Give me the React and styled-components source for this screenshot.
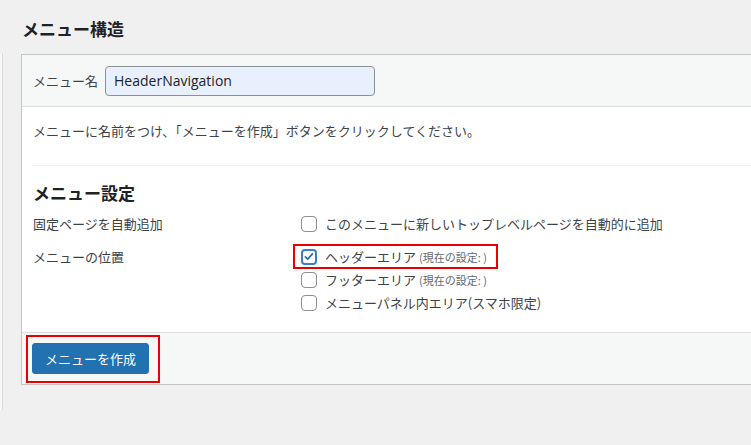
import React from "react";
import styled, { createGlobalStyle } from "styled-components";

const GlobalStyle = createGlobalStyle`
  html, body {
    margin: 0;
    padding: 0;
    background: #f0f0f1;
    overflow: hidden;
  }
  body {
    font-family: "Noto Sans CJK JP", "Noto Sans", sans-serif;
    font-size: 13px;
    color: #3c434a;
  }
`;

const Page = styled.div`
  display: flex;
  width: 751px;
  height: 445px;
  overflow: hidden;
`;

const SideColumn = styled.div`
  flex: none;
  width: 2px;
  height: 357px;
  margin-top: 53px;
  background: #f6f7f7;
  border-right: 1px solid #dcdcde;
`;

const Main = styled.div`
  flex: none;
  margin-left: 18px;
  width: 800px;
`;

const Title = styled.h2`
  margin: 0;
  padding: 17px 0 0 1px;
  height: 54px;
  box-sizing: border-box;
  font-size: 17px;
  line-height: 24px;
  font-weight: 700;
  color: #1d2327;
`;

const Panel = styled.div`
  background: #fff;
  border: 1px solid #c3c4c7;
`;

const PanelHeader = styled.div`
  display: flex;
  align-items: center;
  gap: 7px;
  height: 51px;
  padding: 0 11px;
  background: #f6f7f7;
  border-bottom: 1px solid #dcdcde;
`;

const Label = styled.span`
  line-height: 20px;
  color: #3c434a;
`;

const NameInput = styled.input`
  box-sizing: border-box;
  width: 270px;
  height: 30px;
  padding: 0 8px;
  border: 1px solid #8c8f94;
  border-radius: 4px;
  background: #e8f0fe;
  font-family: "Open Sans", "Noto Sans", sans-serif;
  font-size: 14px;
  color: #1d2327;
  outline: none;
`;

const PanelBody = styled.div`
  padding: 14px 11px 18px;
`;

const Description = styled.p`
  margin: 0;
  line-height: 20px;
`;

const Divider = styled.hr`
  margin: 24px 0 0;
  border: none;
  border-top: 1px solid #f0f0f1;
`;

const SectionTitle = styled.h3`
  margin: 15px 0 0;
  font-size: 17px;
  line-height: 24px;
  font-weight: 700;
  color: #1d2327;
`;

const SettingRow = styled.div`
  display: grid;
  grid-template-columns: 268px 1fr;
  margin-top: ${(p) => p.$gap}px;
`;

const RowLabel = styled.div`
  line-height: 20px;
  padding-top: ${(p) => p.$offset || 0}px;
`;

const Options = styled.div`
  display: flex;
  flex-direction: column;
`;

const Option = styled.label`
  position: relative;
  display: flex;
  align-items: center;
  gap: 8px;
  height: ${(p) => p.$height}px;
  line-height: 20px;
`;

const Box = styled.span`
  flex: none;
  display: flex;
  align-items: center;
  justify-content: center;
  box-sizing: border-box;
  width: 16px;
  height: 16px;
  border: ${(p) => (p.$checked ? "2px solid #3582c4" : "1px solid #8c8f94")};
  border-radius: 4px;
  background: #fff;
`;

const Note = styled.span`
  margin-left: 3px;
  font-size: 11px;
  color: #646970;
`;

const Highlight = styled.span`
  position: absolute;
  border: 2px solid #ea0000;
  pointer-events: none;
  left: ${(p) => p.$l}px;
  top: ${(p) => p.$t}px;
  width: ${(p) => p.$w}px;
  height: ${(p) => p.$h}px;
  box-sizing: border-box;
`;

const PanelFooter = styled.div`
  padding: 10px;
  background: #f6f7f7;
  border-top: 1px solid #dcdcde;
`;

const ButtonWrap = styled.div`
  position: relative;
  display: inline-block;
  vertical-align: top;
`;

const PrimaryButton = styled.button`
  display: block;
  width: 117px;
  height: 31px;
  padding: 0;
  border: 1px solid #2271b1;
  border-radius: 3px;
  background: #2271b1;
  color: #fff;
  font-family: "Noto Sans CJK JP", "Noto Sans", sans-serif;
  font-size: 13px;
  line-height: 29px;
  cursor: pointer;
`;

const Check = ({ checked }) => (
  <Box $checked={checked}>
    {checked && (
      <svg width="13" height="13" viewBox="0 0 20 20">
        <path
          d="M4 10.6l3.8 3.8 8-8.8"
          fill="none"
          stroke="#2271b1"
          strokeWidth="2.8"
          strokeLinecap="round"
          strokeLinejoin="round"
        />
      </svg>
    )}
  </Box>
);

export default function App() {
  return (
    <>
      <GlobalStyle />
      <Page>
        <SideColumn />
        <Main>
          <Title>メニュー構造</Title>
          <Panel>
            <PanelHeader>
              <Label>メニュー名</Label>
              <NameInput defaultValue="HeaderNavigation" />
            </PanelHeader>
            <PanelBody>
              <Description>
                メニューに名前をつけ、「メニューを作成」ボタンをクリックしてください。
              </Description>
              <Divider />
              <SectionTitle>メニュー設定</SectionTitle>
              <SettingRow $gap={9}>
                <RowLabel>固定ページを自動追加</RowLabel>
                <Options>
                  <Option $height={20}>
                    <Check />
                    このメニューに新しいトップレベルページを自動的に追加
                  </Option>
                </Options>
              </SettingRow>
              <SettingRow $gap={11}>
                <RowLabel $offset={2}>メニューの位置</RowLabel>
                <Options>
                  <Option $height={23}>
                    <Check checked />
                    <span>
                      ヘッダーエリア<Note>(現在の設定: )</Note>
                    </span>
                    <Highlight $l={-8} $t={-1} $w={205} $h={25} />
                  </Option>
                  <Option $height={23}>
                    <Check />
                    <span>
                      フッターエリア<Note>(現在の設定: )</Note>
                    </span>
                  </Option>
                  <Option $height={23}>
                    <Check />
                    メニューパネル内エリア(スマホ限定)
                  </Option>
                </Options>
              </SettingRow>
            </PanelBody>
            <PanelFooter>
              <ButtonWrap>
                <PrimaryButton>メニューを作成</PrimaryButton>
                <Highlight $l={-6} $t={-8} $w={134} $h={48} />
              </ButtonWrap>
            </PanelFooter>
          </Panel>
        </Main>
      </Page>
    </>
  );
}
